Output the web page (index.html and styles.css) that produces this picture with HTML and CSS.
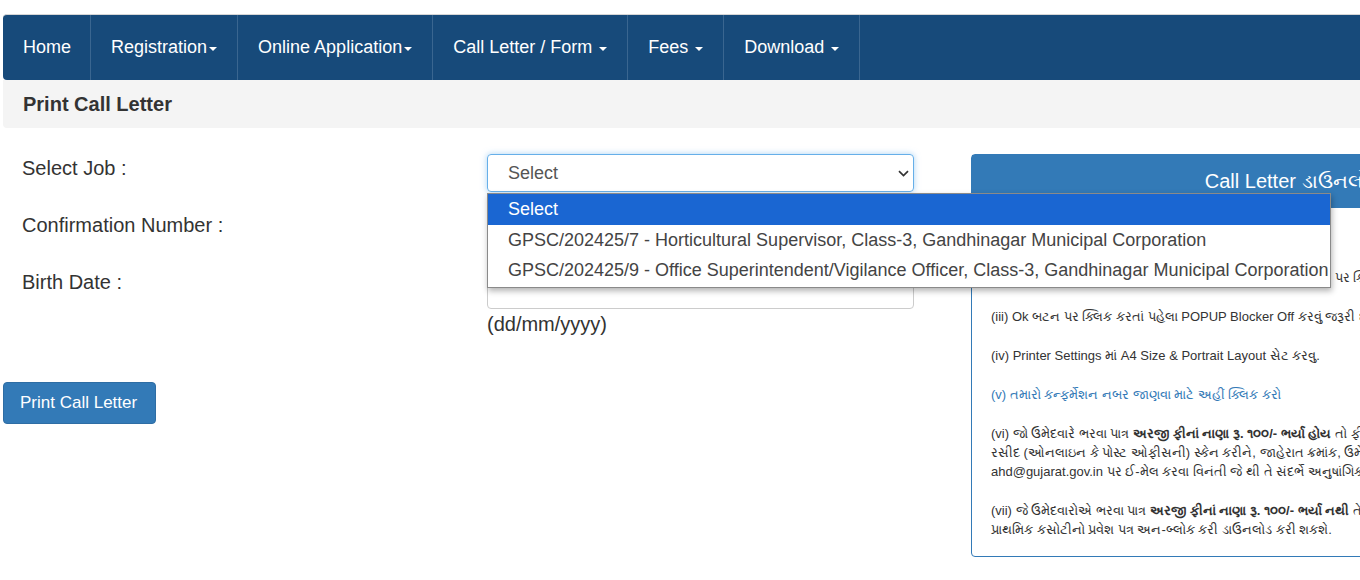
FILE: index.html
```html
<!DOCTYPE html>
<html lang="gu">
<head>
<meta charset="utf-8">
<title>Print Call Letter</title>
<link rel="stylesheet" href="styles.css">
</head>
<body>
<div class="page">
  <nav class="navbar">
    <a class="nav-item" href="#">Home</a>
    <a class="nav-item" href="#">Registration<span class="caret tight"></span></a>
    <a class="nav-item" href="#">Online Application<span class="caret tight"></span></a>
    <a class="nav-item" href="#">Call Letter / Form <span class="caret"></span></a>
    <a class="nav-item" href="#">Fees <span class="caret"></span></a>
    <a class="nav-item" href="#">Download <span class="caret"></span></a>
  </nav>
  <div class="page-head">Print Call Letter</div>

  <div class="main">
    <div class="form-col">
      <div class="form-row">
        <label class="label">Select Job :</label>
        <div class="field">
          <div class="select-box">
            <span>Select</span>
            <svg class="chev" width="11" height="7" viewBox="0 0 11 7"><polyline points="1,1.2 5.5,5.5 10,1.2" fill="none" stroke="#333" stroke-width="1.7"/></svg>
          </div>
          <ul class="select-list">
            <li class="opt active">Select</li>
            <li class="opt">GPSC/202425/7 - Horticultural Supervisor, Class-3, Gandhinagar Municipal Corporation</li>
            <li class="opt">GPSC/202425/9 - Office Superintendent/Vigilance Officer, Class-3, Gandhinagar Municipal Corporation</li>
          </ul>
        </div>
      </div>
      <div class="form-row">
        <label class="label">Confirmation Number :</label>
        <div class="field"><div class="input shifted"></div></div>
      </div>
      <div class="form-row last">
        <label class="label">Birth Date :</label>
        <div class="field">
          <div class="input shifted"></div>
          <div class="hint">(dd/mm/yyyy)</div>
        </div>
      </div>
      <button class="btn">Print Call Letter</button>
    </div>

    <div class="panel">
      <div class="panel-head">Call Letter ડાઉનલોડ કરવા માટેની સૂચનાઓ</div>
      <div class="panel-body">
        <p>(i) જાહેરાત પસંદ કરી કન્ફર્મેશન નંબર દાખલ કરવો.</p>
        <p>(ii) કન્ફર્મેશન નંબર દાખલ કર્યા બાદ જન્મ તારીખ નાખી Ok બટન પર ક્લિક કરવું.</p>
        <p>(iii) Ok બટન પર ક્લિક કરતાં પહેલા POPUP Blocker Off કરવું જરૂરી છે.</p>
        <p>(iv) Printer Settings માં A4 Size &amp; Portrait Layout સેટ કરવુ.</p>
        <p class="link">(v) તમારો કન્ફર્મેશન નબર જાણવા માટે અહીં ક્લિક કરો</p>
        <p>(vi) જો ઉમેદવારે ભરવા પાત્ર <b>અરજી ફીનાં નાણા રૂ. ૧૦૦/- ભર્યા હોય</b> તો ફી ભર્યાની<br>રસીદ (ઓનલાઇન કે પોસ્ટ ઓફીસની) સ્કેન કરીને, જાહેરાત ક્રમાંક, ઉમેદવારનું નામ સાથે<br>ahd@gujarat.gov.in પર ઈ-મેલ કરવા વિનંતી જે થી તે સંદર્ભે અનુષાંગિક કાર્યવાહી થઈ શકે.</p>
        <p>(vii) જે ઉમેદવારોએ ભરવા પાત્ર <b>અરજી ફીનાં નાણા રૂ. ૧૦૦/- ભર્યા નથી</b> તેઓ<br>પ્રાથમિક કસોટીનો પ્રવેશ પત્ર અન-બ્લોક કરી ડાઉનલોડ કરી શકશે.</p>
      </div>
    </div>
  </div>
</div>
</body>
</html>
```

FILE: styles.css
```css
html, body {
  margin: 0;
  padding: 0;
  background: #fff;
  overflow: hidden;
}
body {
  font-family: "Liberation Sans", Arial, "Noto Sans", sans-serif;
  color: #333;
}
.page {
  width: 1840px;
  margin: 14px 0 0 3px;
}
.navbar {
  display: flex;
  height: 65px;
  background: #174a7a;
  border-top: 1px solid #d6d6d6;
  border-radius: 4px 0 0 4px;
}
.nav-item {
  display: flex;
  align-items: center;
  padding: 0 20px 0 20px;
  color: #fff;
  font-size: 18px;
  text-decoration: none;
  border-right: 1px solid #3a6690;
  white-space: pre;
}
.nav-item:first-child { padding-right: 19px; }
.caret {
  display: inline-block;
  width: 0;
  height: 0;
  margin-left: 2px;
  border-top: 4px solid #fff;
  border-left: 4px solid transparent;
  border-right: 4px solid transparent;
  vertical-align: middle;
  position: relative;
  top: 1px;
}
.caret.tight { margin-left: 2px; }
.page-head {
  height: 48px;
  line-height: 48px;
  background: #f4f4f4;
  padding-left: 20px;
  font-size: 20px;
  font-weight: bold;
  border-radius: 0 0 0 4px;
}
.main {
  display: flex;
  align-items: flex-start;
  padding-top: 26px;
  gap: 40px;
}
.form-col {
  width: 928px;
  display: flex;
  flex-direction: column;
  align-items: flex-start;
}
.form-row {
  display: grid;
  grid-template-columns: 484px 427px;
  height: 57px;
  width: 911px;
}
.form-row.last { height: auto; }
.label {
  padding: 3px 0 0 19px;
  font-size: 20px;
  line-height: 22px;
}
.field {
  position: relative;
}
.select-box {
  height: 38px;
  box-sizing: border-box;
  border: 1px solid #66afe9;
  border-radius: 4px;
  box-shadow: 0 0 6px rgba(102, 175, 233, 0.55);
  display: flex;
  align-items: center;
  justify-content: space-between;
  padding: 0 4px 0 20px;
  font-size: 18px;
  color: #555;
}
.chev { margin-top: 1px; }
.select-list {
  position: absolute;
  top: 39px;
  left: 0;
  margin: 0;
  padding: 0 0 2px 0;
  list-style: none;
  background: #fff;
  border: 1px solid #8a8a8a;
  box-shadow: 1px 3px 6px rgba(0, 0, 0, 0.3);
  z-index: 5;
  width: 842px;
}
.opt {
  height: 30px;
  line-height: 31px;
  padding-left: 20px;
  font-size: 18px;
  color: #444;
  white-space: nowrap;
}
.opt.active {
  height: 31px;
  line-height: 31px;
  background: #1a66d2;
  color: #fff;
}
.input {
  height: 38px;
  box-sizing: border-box;
  border: 1px solid #ccc;
  border-radius: 4px;
}
.input.shifted { margin-top: 3px; }
.hint {
  font-size: 20px;
  line-height: 22px;
  margin-top: 4px;
}
.btn {
  margin-top: 47px;
  height: 42px;
  padding: 0 18px 0 16px;
  background: #337ab7;
  border: 1px solid #2e6da4;
  border-radius: 4px;
  color: #fff;
  font-family: "Liberation Sans", Arial, sans-serif;
  font-size: 17px;
}
.panel {
  width: 826px;
  border: 1px solid #337ab7;
  border-radius: 4px;
}
.panel-head {
  height: 53px;
  line-height: 52px;
  background: #337ab7;
  color: #fff;
  text-align: center;
  font-size: 20px;
  white-space: nowrap;
}
.panel-body {
  padding: 21px 19px 17px 19px;
  font-size: 13px;
  line-height: 19px;
  white-space: nowrap;
}
.panel-body p {
  margin: 0 0 20px 0;
}
.panel-body p:last-child { margin-bottom: 0; }
.panel-body .link { color: #337ab7; }
```
